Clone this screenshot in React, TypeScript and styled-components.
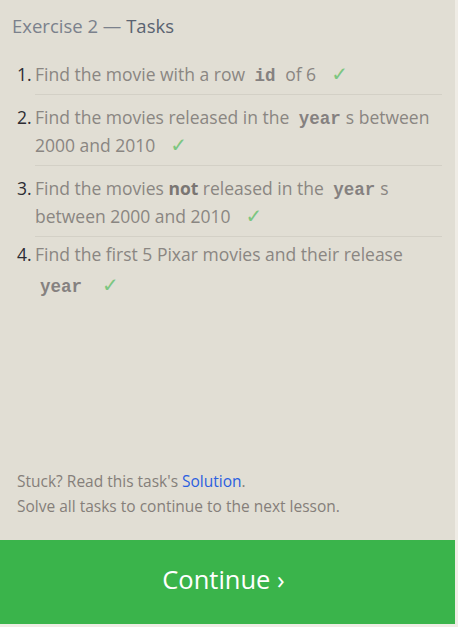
import React from "react";
import styled, { createGlobalStyle } from "styled-components";

const Global = createGlobalStyle`
  html, body { margin: 0; padding: 0; background: #efece5; }
  body { font-family: "Open Sans", "Noto Sans", sans-serif; }
`;

const Panel = styled.div`
  width: 455px;
  height: 624px;
  background: #e1ded4;
  display: flex;
  flex-direction: column;
`;

const Content = styled.div`
  flex: 1;
  display: flex;
  flex-direction: column;
  padding: 12px 13px 0 12px;
`;

const Heading = styled.h2`
  margin: 0;
  font-size: 18.5px;
  font-weight: 400;
  line-height: 28px;
  color: #7b818c;
  & b { font-weight: 400; color: #5a6371; }
`;

const TaskList = styled.ol`
  list-style: none;
  margin: 12px 0 0 0;
  padding: 0;
`;

const Task = styled.li<{ $last?: boolean }>`
  display: flex;
  padding: ${(p) => (p.$last ? "3px" : "8px")} 0 6px;
  border-bottom: 1px solid ${(p) => (p.$last ? "transparent" : "#d3d0c6")};
  margin-left: 23px;
  position: relative;
  font-size: 17.5px;
  line-height: 28px;
  color: #8a8682;
`;

const Num = styled.span`
  position: absolute;
  left: -18px;
  color: #2c2c33;
`;

const Code = styled.code<{ $tall?: boolean }>`
  font-family: "Liberation Mono", monospace;
  font-weight: 700;
  font-size: 17.5px;
  line-height: ${(p) => (p.$tall ? "28px" : "1")};
  color: #858180;
  padding: 0 5px;
  display: ${(p) => (p.$tall ? "inline-block" : "inline")};
  margin-top: ${(p) => (p.$tall ? "5px" : "0")};
`;

const Strong = styled.b`
  font-weight: 700;
  color: #7a7673;
`;

const Check = styled.span`
  font-family: "DejaVu Sans", sans-serif;
  color: #7cc681;
  margin-left: 15px;
  font-size: 20px;
  line-height: 1;
`;

const Spacer = styled.div`
  flex: 1;
`;

const Notes = styled.div`
  font-size: 15.5px;
  line-height: 25px;
  color: #857f7a;
  padding: 0 0 21px 5px;
  & a { color: #2b5fe0; text-decoration: none; }
`;

const Continue = styled.button`
  height: 84px;
  border: none;
  background: #3ab44b;
  color: #fff;
  font-family: "Open Sans", sans-serif;
  font-size: 25.5px;
  cursor: pointer;
  padding: 0 8px 6px 0;
`;

export default function App() {
  return (
    <>
      <Global />
      <Panel>
        <Content>
          <Heading>
            Exercise 2 — <b>Tasks</b>
          </Heading>
          <TaskList>
            <Task>
              <Num>1.</Num>
              <span>
                Find the movie with a row <Code>id</Code> of 6<Check>✓</Check>
              </span>
            </Task>
            <Task>
              <Num>2.</Num>
              <span>
                Find the movies released in the <Code>year</Code>s between 2000 and 2010
                <Check>✓</Check>
              </span>
            </Task>
            <Task>
              <Num>3.</Num>
              <span>
                Find the movies <Strong>not</Strong> released in the <Code>year</Code>s between 2000 and
                2010<Check>✓</Check>
              </span>
            </Task>
            <Task $last>
              <Num>4.</Num>
              <span>
                Find the first 5 Pixar movies and their release <Code $tall>year</Code>
                <Check>✓</Check>
              </span>
            </Task>
          </TaskList>
          <Spacer />
          <Notes>
            Stuck? Read this task's <a href="#">Solution</a>.
            <br />
            Solve all tasks to continue to the next lesson.
          </Notes>
        </Content>
        <Continue>Continue ›</Continue>
      </Panel>
    </>
  );
}
